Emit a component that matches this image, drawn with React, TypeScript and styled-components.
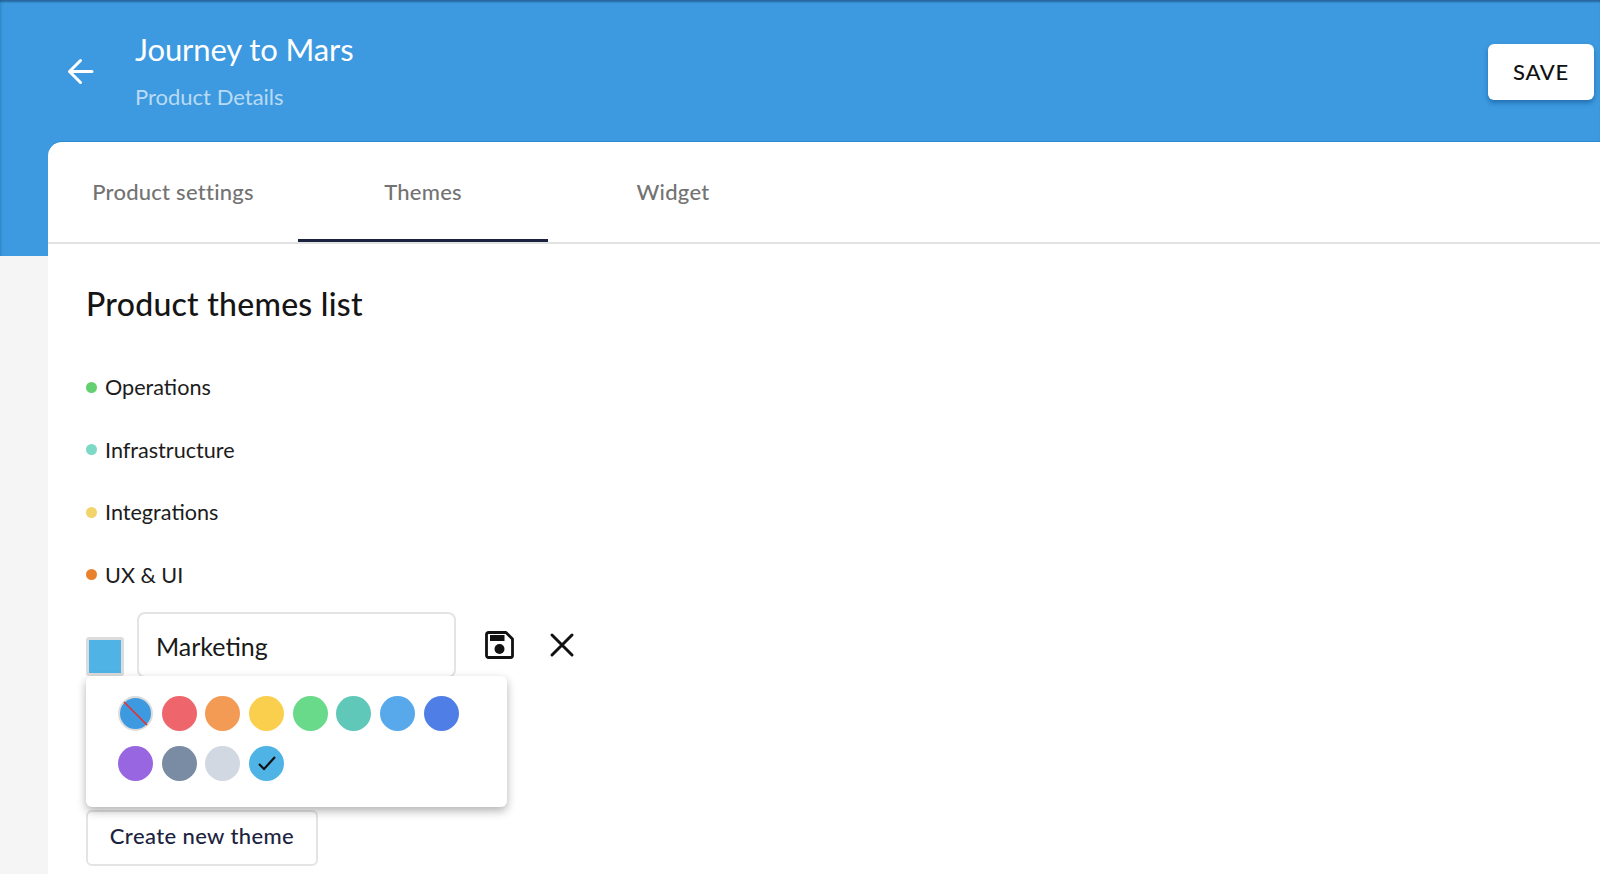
import React from "react";
import styled, { createGlobalStyle } from "styled-components";

const Global = createGlobalStyle`
  html, body { margin: 0; padding: 0; height: 874px; overflow: hidden; background: #f5f5f5; }
  body { font-family: "Lato", "Open Sans", sans-serif; }
  * { box-sizing: border-box; }
`;

const Page = styled.div`
  height: 874px;
  overflow: hidden;
  background: #f5f5f5;
`;

const Header = styled.header`
  height: 256px;
  background: #3d9ae0;
  box-shadow: inset 0 3px 2px -1px rgba(20, 60, 100, 0.55), inset 3px 0 3px -2px rgba(20, 70, 120, 0.25);
  display: flex;
  align-items: flex-start;
  padding: 31px 6px 0 67px;
`;

const BackButton = styled.button`
  width: 27px;
  height: 27px;
  margin-top: 27px;
  padding: 0;
  border: 0;
  background: none;
  color: #fff;
  display: block;
`;

const Titles = styled.div`
  margin-left: 41px;
  flex: 1;
`;

const Title = styled.h1`
  margin: 0;
  font-size: 31px;
  line-height: 37px;
  font-weight: 400;
  color: #fff;
  letter-spacing: -0.1px;
`;

const Subtitle = styled.div`
  margin-top: 15px;
  font-size: 22px;
  line-height: 28px;
  color: #b9daf4;
`;

const SaveButton = styled.button`
  width: 106px;
  height: 56px;
  margin-top: 13px;
  padding: 0 0 2px;
  border: 0;
  border-radius: 6px;
  background: #fff;
  color: #111;
  font: 500 22px "Lato", sans-serif;
  letter-spacing: 0.7px;
  box-shadow: 0 3px 5px rgba(0, 60, 120, 0.45);
`;

const Card = styled.main`
  margin: -114px 0 0 48px;
  height: 732px;
  background: #fff;
  border-radius: 14px 0 0 0;
  box-shadow: 0 -1px 0 #2a8ccf;
`;

const Tabs = styled.nav`
  height: 102px;
  display: flex;
  border-bottom: 2px solid #e2e2e2;
`;

const Tab = styled.div<{ $active?: boolean }>`
  width: 250px;
  height: 100px;
  padding-top: 36px;
  text-align: center;
  font-size: 22px;
  line-height: 28px;
  font-weight: 500;
  letter-spacing: 0.25px;
  color: #737373;
  border-bottom: 3px solid ${(p) => (p.$active ? "#1c2340" : "transparent")};
`;

const Content = styled.section`
  padding: 0 0 0 38px;
`;

const Heading = styled.h2`
  margin: 41px 0 0;
  font-size: 32px;
  line-height: 38px;
  font-weight: 500;
  letter-spacing: 0.25px;
  color: #151515;
`;

const ThemeList = styled.ul`
  list-style: none;
  margin: 0;
  padding: 33px 0 0;
`;

const ThemeItem = styled.li`
  display: flex;
  align-items: center;
  height: 62.5px;
  font-size: 21.6px;
  color: #1c1c1c;
`;

const Dot = styled.span<{ $color: string }>`
  width: 11px;
  height: 11px;
  margin-right: 8px;
  border-radius: 50%;
  background: ${(p) => p.$color};
`;

const EditRow = styled.div`
  position: relative;
  display: flex;
  align-items: flex-start;
  margin-top: 5.5px;
  height: 198px;
`;

const Swatch = styled.div`
  width: 38px;
  height: 39px;
  margin-top: 25px;
  background: #4fb3e6;
  border: 3px solid #dcdcdc;
  border-radius: 3px;
`;

const NameInput = styled.input`
  width: 319px;
  height: 66px;
  margin-left: 13px;
  padding: 2px 18px 0 17px;
  border: 2px solid #e4e4e4;
  border-radius: 8px;
  outline: none;
  font: 400 25px "Lato", sans-serif;
  color: #1a1a1a;
`;

const IconButton = styled.button`
  padding: 0;
  border: 0;
  background: none;
  color: #111;
  display: flex;
  align-items: center;
  justify-content: center;
`;

const SaveIcon = styled(IconButton)`
  margin: 19px 0 0 29px;
  width: 29px;
  height: 28px;
`;

const CloseIcon = styled(IconButton)`
  margin: 20px 0 0 35px;
  width: 26px;
  height: 26px;
`;

const Popover = styled.div`
  position: absolute;
  left: 0;
  top: 64px;
  width: 421px;
  height: 131px;
  padding: 20px 0 0 32px;
  background: #fff;
  border-radius: 6px;
  box-shadow: 0 4px 10px rgba(0, 0, 0, 0.3);
  display: grid;
  grid-template-columns: repeat(8, 35px);
  grid-auto-rows: 35px;
  column-gap: 8.7px;
  row-gap: 15px;
  align-content: start;
`;

const Color = styled.div<{ $color: string; $none?: boolean }>`
  position: relative;
  width: 35px;
  height: 35px;
  border-radius: 50%;
  background: ${(p) => p.$color};
  border: ${(p) => (p.$none ? "2px solid #dcdcdc" : "0")};
  display: flex;
  align-items: center;
  justify-content: center;
  color: #111;
`;

const NoneSlash = styled.svg`
  position: absolute;
  left: -2px;
  top: -2px;
`;

const CreateButton = styled.button`
  display: block;
  width: 232px;
  height: 56px;
  padding: 0 0 4px;
  border: 2px solid #e4e4e4;
  border-radius: 6px;
  background: #fff;
  font: 500 22px "Lato", sans-serif;
  letter-spacing: 0.4px;
  color: #1c2340;
`;

const themes = [
  { name: "Operations", color: "#65d06f" },
  { name: "Infrastructure", color: "#7bd9c6" },
  { name: "Integrations", color: "#f3d36b" },
  { name: "UX & UI", color: "#e8802c" },
];

const colors = [
  "#3d9ae0",
  "#ee656b",
  "#f39a54",
  "#fbcf4e",
  "#69d98a",
  "#5fc8b9",
  "#58a9ec",
  "#4f7fe6",
  "#9866e0",
  "#7a8ca3",
  "#d1d8e1",
  "#4fb3e6",
];

export default function App() {
  return (
    <Page>
      <Global />
      <Header>
        <BackButton aria-label="Back">
          <svg width="27" height="27" viewBox="0 0 27 27" fill="none" stroke="currentColor" strokeWidth="3" strokeLinecap="round" strokeLinejoin="round">
            <path d="M25 13.5H2.5M13.5 2.5 2.5 13.5l11 11" />
          </svg>
        </BackButton>
        <Titles>
          <Title>Journey to Mars</Title>
          <Subtitle>Product Details</Subtitle>
        </Titles>
        <SaveButton>SAVE</SaveButton>
      </Header>
      <Card>
        <Tabs>
          <Tab>Product settings</Tab>
          <Tab $active>Themes</Tab>
          <Tab>Widget</Tab>
        </Tabs>
        <Content>
          <Heading>Product themes list</Heading>
          <ThemeList>
            {themes.map((t) => (
              <ThemeItem key={t.name}>
                <Dot $color={t.color} />
                {t.name}
              </ThemeItem>
            ))}
          </ThemeList>
          <EditRow>
            <Swatch />
            <NameInput defaultValue="Marketing" />
            <SaveIcon aria-label="Save theme">
              <svg width="29" height="28" viewBox="0 0 29 28" fill="none">
                <path d="M3.5 1.5H21L27.5 8v16.5a2 2 0 0 1-2 2h-22a2 2 0 0 1-2-2v-21a2 2 0 0 1 2-2Z" stroke="#111" strokeWidth="2.8" strokeLinejoin="round" />
                <rect x="5" y="4" width="14.5" height="6" fill="#111" />
                <circle cx="14.5" cy="18" r="5" fill="#111" />
              </svg>
            </SaveIcon>
            <CloseIcon aria-label="Cancel">
              <svg width="26" height="26" viewBox="0 0 26 26" fill="none" stroke="currentColor" strokeWidth="3" strokeLinecap="round">
                <path d="M3 3l20 20M23 3 3 23" />
              </svg>
            </CloseIcon>
            <Popover>
              {colors.map((c, i) => (
                <Color key={c} $color={c} $none={i === 0}>
                  {i === 0 && (
                    <NoneSlash width="35" height="35" viewBox="0 0 35 35">
                      <line x1="6" y1="6" x2="29" y2="29" stroke="#ee2b2b" strokeWidth="1.6" />
                    </NoneSlash>
                  )}
                  {i === 11 && (
                    <svg width="20" height="16" viewBox="0 0 20 16" fill="none" stroke="currentColor" strokeWidth="2.2">
                      <path d="M2 9l5 5L18 2" />
                    </svg>
                  )}
                </Color>
              ))}
            </Popover>
          </EditRow>
          <CreateButton>Create new theme</CreateButton>
        </Content>
      </Card>
    </Page>
  );
}
